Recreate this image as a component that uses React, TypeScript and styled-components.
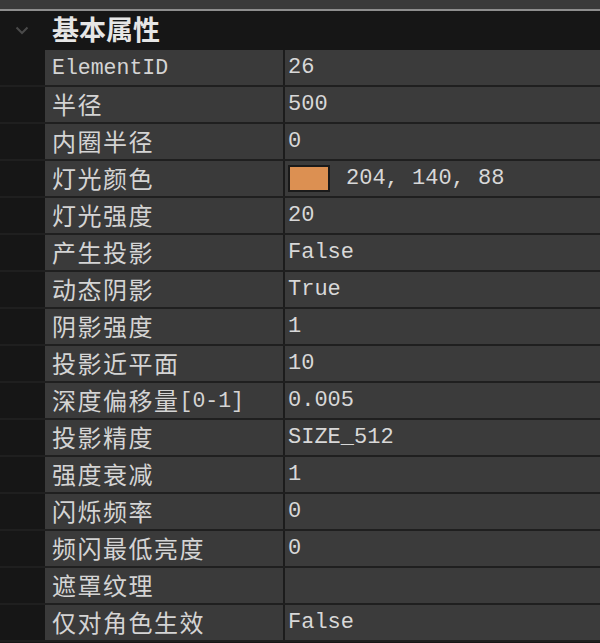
import React from "react";
import styled, { createGlobalStyle } from "styled-components";

const Global = createGlobalStyle`
  html, body { margin: 0; padding: 0; background: #161616; }
  body { width: 600px; height: 643px; overflow: hidden; }
`;

const Panel = styled.div`
  width: 600px;
  height: 643px;
  background: #161616;
  display: flex;
  flex-direction: column;
  overflow: hidden;
`;

const TopBar = styled.div`
  height: 9px;
  background: #3a3a3a;
  border-bottom: 2px solid #8e8e8e;
  flex: none;
`;

const Header = styled.div`
  height: 39px;
  display: grid;
  grid-template-columns: 52px 1fr;
  align-items: center;
  flex: none;
`;

const Chevron = styled.div`
  display: flex;
  justify-content: center;
  padding-right: 8px;
  svg { display: block; }
`;

const Title = styled.div`
  font-family: "Noto Sans CJK SC", sans-serif;
  font-weight: 700;
  font-size: 27px;
  color: #e6e6e6;
  line-height: 1;
  margin-top: -4px;
`;

const Rows = styled.div`
  display: flex;
  flex-direction: column;
`;

const Row = styled.div`
  height: 35px;
  display: grid;
  grid-template-columns: 45px 238px 1fr;
  border-bottom: 2px solid #1f1f1f;
  background: #161616;
`;

const Gutter = styled.div`
  background: #161616;
`;

const NameCell = styled.div`
  background: #3a3a3a;
  display: flex;
  align-items: center;
  padding-left: 7px;
  padding-bottom: 3px;
  font-family: "Noto Sans CJK SC", sans-serif;
  font-size: 24px;
  letter-spacing: 1.5px;
  color: #d4d4d4;
  white-space: nowrap;
  overflow: hidden;
`;

const Mono = styled.span`
  font-family: "Liberation Mono", monospace;
  font-size: 21.5px;
  letter-spacing: 0;
  transform: translateY(2px);
  display: inline-block;
`;

const ValueCell = styled.div`
  background: #3b3b3b;
  border-left: 2px solid #1c1c1c;
  display: flex;
  align-items: center;
  padding-left: 3px;
  font-family: "Liberation Mono", monospace;
  font-size: 22px;
  color: #d8d8d8;
  white-space: pre;
`;

const Swatch = styled.span<{ $color: string }>`
  width: 38px;
  height: 23px;
  background: ${(p) => p.$color};
  border: 2px solid #1a1a1a;
  margin-right: 16px;
  flex: none;
`;

type Item = { name: React.ReactNode; value?: string; color?: string };

const items: Item[] = [
  { name: <Mono>ElementID</Mono>, value: "26" },
  { name: "半径", value: "500" },
  { name: "内圈半径", value: "0" },
  { name: "灯光颜色", value: "204, 140, 88", color: "rgb(220,144,82)" },
  { name: "灯光强度", value: "20" },
  { name: "产生投影", value: "False" },
  { name: "动态阴影", value: "True" },
  { name: "阴影强度", value: "1" },
  { name: "投影近平面", value: "10" },
  { name: <>深度偏移量<Mono>[0-1]</Mono></>, value: "0.005" },
  { name: "投影精度", value: "SIZE_512" },
  { name: "强度衰减", value: "1" },
  { name: "闪烁频率", value: "0" },
  { name: "频闪最低亮度", value: "0" },
  { name: "遮罩纹理", value: "" },
  { name: "仅对角色生效", value: "False" },
];

export default function App() {
  return (
    <>
      <Global />
      <Panel>
        <TopBar />
        <Header>
          <Chevron>
            <svg width="14" height="9" viewBox="0 0 14 9">
              <path d="M1.5 1.5 L7 7 L12.5 1.5" fill="none" stroke="#4a4a4a" strokeWidth="2" />
            </svg>
          </Chevron>
          <Title>基本属性</Title>
        </Header>
        <Rows>
          {items.map((it, i) => (
            <Row key={i}>
              <Gutter />
              <NameCell>{it.name}</NameCell>
              <ValueCell>
                {it.color && <Swatch $color={it.color} />}
                {it.value}
              </ValueCell>
            </Row>
          ))}
        </Rows>
      </Panel>
    </>
  );
}
